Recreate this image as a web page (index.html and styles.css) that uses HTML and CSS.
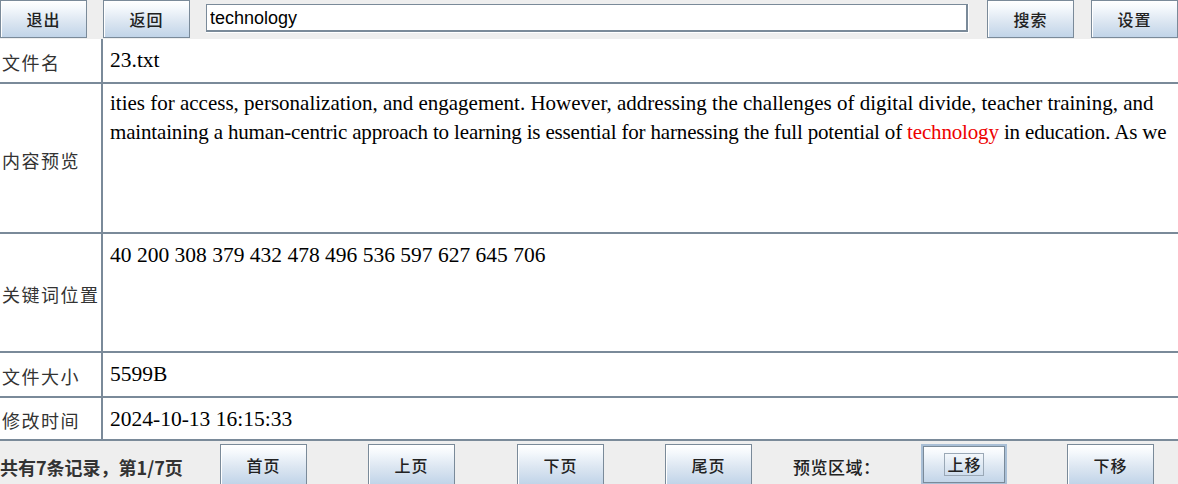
FILE: index.html
```html
<!DOCTYPE html>
<html lang="zh">
<head>
<meta charset="utf-8">
<title>搜索</title>
<link rel="stylesheet" href="styles.css">
</head>
<body>
<div class="app">
  <div class="topbar">
    <button class="btn">退出</button>
    <button class="btn gap16">返回</button>
    <div class="field-wrap"><input class="field" type="text" value="technology"></div>
    <button class="btn gap18">搜索</button>
    <button class="btn gap17">设置</button>
  </div>
  <div class="table">
    <div class="row r1"><div class="label">文件名</div><div class="value">23.txt</div></div>
    <div class="row r2"><div class="label">内容预览</div><div class="value preview"><span class="line">ities for access, personalization, and engagement. However, addressing the challenges of digital divide, teacher training, and</span><span class="line tight">maintaining a human-centric approach to learning is essential for harnessing the full potential of <span class="hl">technology</span> in education. As we</span></div></div>
    <div class="row r3"><div class="label">关键词位置</div><div class="value">40 200 308 379 432 478 496 536 597 627 645 706</div></div>
    <div class="row r4"><div class="label">文件大小</div><div class="value">5599B</div></div>
    <div class="row r5"><div class="label">修改时间</div><div class="value">2024-10-13 16:15:33</div></div>
  </div>
  <div class="bottombar">
    <div class="status">共有7条记录，第1/7页</div>
    <button class="btn b-first">首页</button>
    <button class="btn b-prev">上页</button>
    <button class="btn b-next">下页</button>
    <button class="btn b-last">尾页</button>
    <div class="area-label">预览区域：</div>
    <button class="btn focus b-up"><span class="focus-ring">上移</span></button>
    <button class="btn b-down">下移</button>
  </div>
</div>
</body>
</html>
```
FILE: styles.css
```css
* { box-sizing: border-box; }
html, body { margin: 0; padding: 0; }
body {
  width: 1178px;
  height: 484px;
  overflow: hidden;
  background: #eeeeee;
  font-family: "Liberation Serif", "Noto Sans CJK SC", serif;
}
.app { display: flex; flex-direction: column; height: 484px; }

.btn {
  width: 87px;
  height: 39px;
  margin: 0;
  padding: 0;
  border: 1px solid #7a8a99;
  box-shadow: inset 1px 1px 0 #ffffff;
  background: linear-gradient(#ffffff 0%, #f4f8fc 20%, #dde7f2 55%, #c1d4e8 100%);
  font-family: "Noto Sans CJK SC", sans-serif;
  font-size: 16px;
  font-weight: 500;
  color: #222222;
  letter-spacing: 1px;
  line-height: 1;
  flex: none;
}

.topbar {
  display: flex;
  align-items: flex-start;
  height: 39px;
  background: #eeeeee;
}
.topbar .btn { height: 38px; }
.gap16 { margin-left: 16px !important; }
.gap18 { margin-left: 18px !important; }
.gap17 { margin-left: 17px !important; }
.field-wrap {
  margin-left: 16px;
  margin-top: 4px;
  width: 763px;
  height: 29px;
  background: #ffffff;
  padding: 0 1px 1px 0;
}
.field {
  display: block;
  width: 100%;
  height: 100%;
  margin: 0;
  border: 1px solid #7a8a99;
  border-width: 1px 2px 2px 1px;
  padding: 2px 3px 0;
  font-family: "Liberation Sans", sans-serif;
  font-size: 18px;
  color: #000;
  background: #fff;
  outline: none;
}

.table { background: #ffffff; display: flex; flex-direction: column; }
.row {
  display: grid;
  grid-template-columns: 103px 1fr;
  border-bottom: 2px solid #7a8a99;
}
.r1 { height: 45px; }
.r2 { height: 150px; }
.r3 { height: 119px; }
.r4 { height: 45px; }
.r5 { height: 43px; }
.label {
  border-right: 2px solid #7a8a99;
  display: flex;
  align-items: center;
  padding-left: 2px;
  padding-top: 3px;
  font-family: "Noto Sans CJK SC", sans-serif;
  font-size: 18px;
  letter-spacing: 1.5px;
  color: #333333;
  white-space: nowrap;
}
.value {
  padding: 7px 0 0 7px;
  font-size: 21.5px;
  line-height: 29px;
  color: #000;
}
.value.preview {
  font-size: 21px;
  padding-top: 5px;
  padding-right: 0;
  white-space: nowrap;
  overflow: hidden;
}
.line { display: block; }
.tight { letter-spacing: -0.16px; }
.hl { color: #ee0000; }

.bottombar {
  flex: 1;
  display: flex;
  align-items: flex-start;
  padding-top: 3px;
  background: #eeeeee;
  overflow: hidden;
}
.bottombar .btn { height: 41px; }
.status {
  width: 220px;
  padding-top: 10px;
  font-family: "Noto Sans CJK SC", sans-serif;
  font-weight: bold;
  font-size: 18px;
  color: #333333;
  white-space: nowrap;
  flex: none;
}
.b-prev { margin-left: 61px; }
.b-next { margin-left: 62px; }
.b-last { margin-left: 61px; }
.area-label {
  margin-left: 41px;
  width: 128px;
  padding-top: 10px;
  font-family: "Noto Sans CJK SC", sans-serif;
  font-size: 17px;
  font-weight: 500;
  letter-spacing: 0.5px;
  color: #222222;
  flex: none;
}
.b-up {
  width: 86px;
  border: 2px solid #a9bfd6;
  outline: 1px solid #7a8a99;
  outline-offset: -3px;
}
.focus-ring {
  display: inline-block;
  border: 1px solid #9aa8b6;
  padding: 2px 1px 3px 2px;
}
.b-down { margin-left: 60px; }
```
